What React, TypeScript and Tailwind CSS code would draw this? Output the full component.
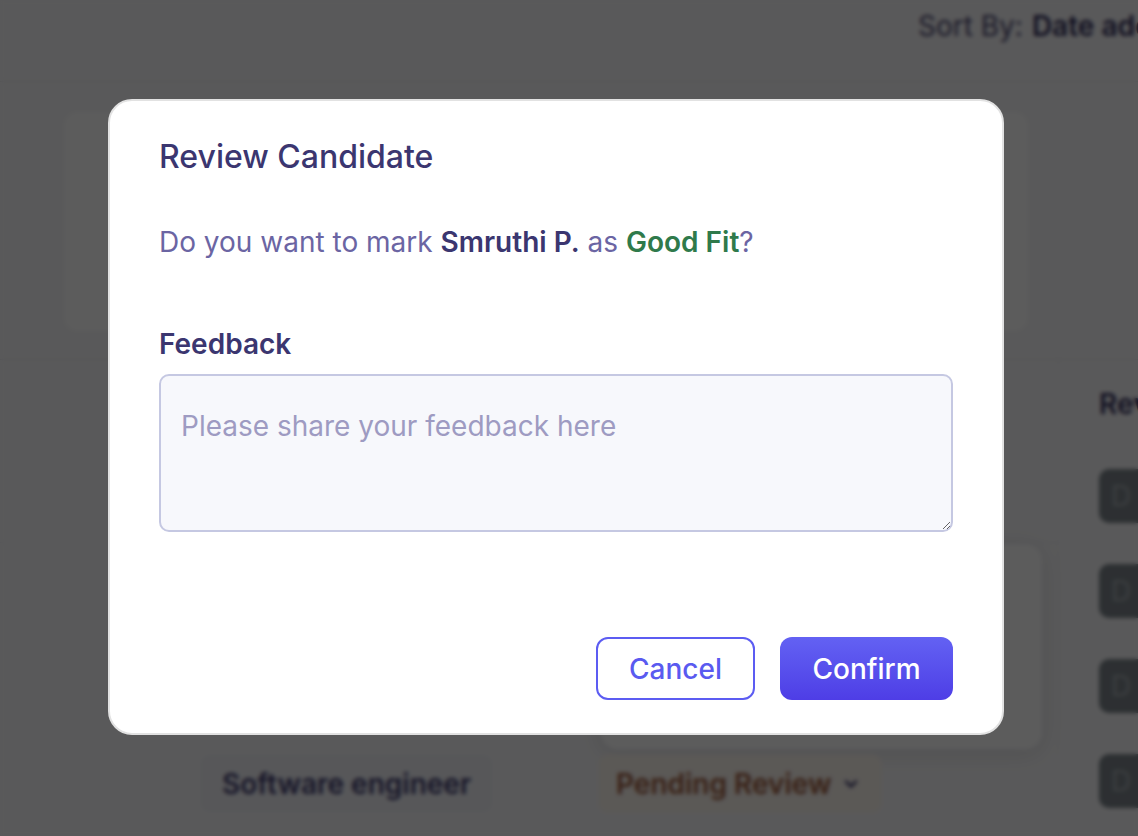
import React from "react";

const font = { fontFamily: "Inter, 'Noto Sans', sans-serif" };

function Background() {
  const rows = [0, 1, 2, 3];
  return (
    <div className="w-[1138px] h-[836px] overflow-hidden bg-[#f7f7f9] flex flex-col" style={font}>
      <div className="h-[82px] shrink-0 border-b border-[#e4e4ec] flex items-start pt-[5px] pl-[918px] whitespace-nowrap text-[28px] text-[#4a4670]">
        <span>Sort By:</span>
        <span className="ml-[9px] font-semibold text-[#2f2c5a]">Date added</span>
      </div>
      <div className="h-[278px] shrink-0 border-b border-[#e4e4ec] pt-[28px] pl-[62px] pr-[108px]">
        <div className="h-[223px] bg-white rounded-[16px] border border-[#ececf2]" />
      </div>
      <div className="flex-1 flex">
        <div className="w-[1058px] shrink-0 flex flex-col">
          <div className="h-[88px] shrink-0" />
          <div className="h-[95px] shrink-0 border-b border-[#ececf2]" />
          <div className="h-[95px] shrink-0 flex">
            <div className="w-[600px] shrink-0" />
            <div className="w-[443px] h-[207px] shrink-0 bg-white rounded-[18px] shadow-[0_4px_24px_rgba(0,0,0,0.10)] border border-[#ececf2]" />
          </div>
          <div className="h-[95px] shrink-0" />
          <div className="flex items-center h-[95px] pt-[6px] shrink-0">
            <div className="ml-[200px] h-[59px] w-[293px] shrink-0 rounded-[10px] bg-[#f1f2f7] flex items-center pl-[22px] text-[28px] font-semibold text-[#3d3a6e] whitespace-nowrap">
              Software engineer
            </div>
            <div className="ml-[105px] h-[59px] w-[284px] shrink-0 rounded-[10px] bg-[#fbf5ef] flex items-center pl-[18px] gap-[10px] text-[28px] font-semibold text-[#9c5a3c] whitespace-nowrap">
              Pending Review
              <svg width="20" height="20" viewBox="0 0 24 24" fill="none" stroke="#3d3a6e" strokeWidth="3" strokeLinecap="round" strokeLinejoin="round">
                <path d="M6 9l6 6 6-6" />
              </svg>
            </div>
          </div>
        </div>
        <div className="flex-1 border-l border-[#ececf2] flex flex-col pl-[40px]">
          <div className="h-[88px] shrink-0 flex items-center text-[28px] font-semibold text-[#2f2c5a] whitespace-nowrap">
            Review
          </div>
          {rows.map((r) => (
            <div key={r} className="h-[95px] shrink-0 flex items-center">
              <div className="h-[54px] w-[120px] shrink-0 rounded-[10px] bg-[#7c848b] flex items-center pl-[12px] text-[28px] text-[#a8aeb3]">
                D
              </div>
            </div>
          ))}
        </div>
      </div>
    </div>
  );
}

export default function App() {
  return (
    <div className="relative w-[1138px] h-[836px] overflow-hidden" style={font}>
      <Background />
      <div className="absolute inset-0 bg-black/[0.64] backdrop-blur-[2px] pl-[108px] pt-[99px]">
        <div className="w-[896px] h-[636px] bg-white rounded-[24px] border-2 border-[#e2e2e2] px-[49px] pt-[38px] flex flex-col">
          <h2 className="text-[32px] leading-[36px] font-medium text-[#3b3670]">Review Candidate</h2>
          <p className="mt-[51px] text-[28px] leading-[32px] text-[#6b65a3]">
            Do you want to mark <span className="font-semibold text-[#3b3670]">Smruthi P.</span> as{" "}
            <span className="font-semibold text-[#2f7a4b]">Good Fit</span>?
          </p>
          <label className="mt-[70px] text-[28px] leading-[32px] font-semibold text-[#3b3670]">Feedback</label>
          <textarea
            className="mt-[14px] h-[158px] w-full shrink-0 rounded-[10px] border-2 border-[#c5c8e2] bg-[#f7f8fc] px-[20px] pt-[34px] text-[28px] leading-[32px] text-[#3b3670] placeholder:text-[#9e9bc2] outline-none resize-y"
            placeholder="Please share your feedback here"
          />
          <div className="mt-[105px] flex justify-end gap-[25px]">
            <button className="h-[63px] w-[159px] rounded-[12px] border-2 border-[#5c5cf2] bg-white text-[28px] font-medium text-[#5a5af0]">
              Cancel
            </button>
            <button className="h-[63px] w-[173px] rounded-[12px] bg-gradient-to-b from-[#6361f3] to-[#4e3de6] text-[28px] font-medium text-white">
              Confirm
            </button>
          </div>
        </div>
      </div>
    </div>
  );
}
